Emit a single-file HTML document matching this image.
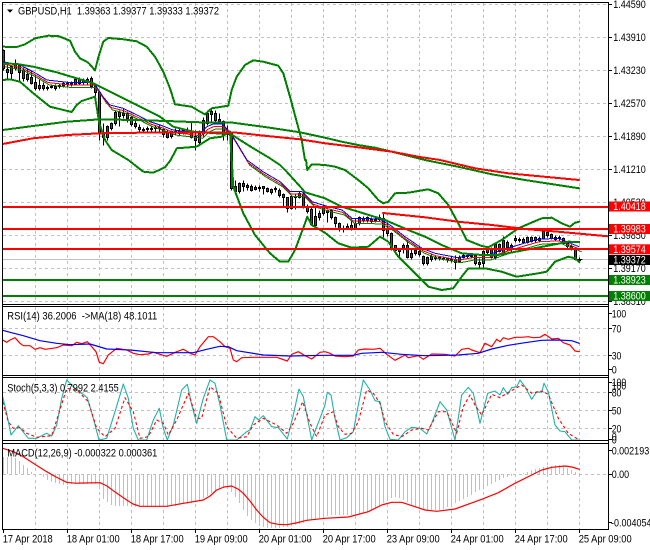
<!DOCTYPE html>
<html><head><meta charset="utf-8"><title>GBPUSD,H1</title>
<style>
html,body{margin:0;padding:0;background:#fff;width:650px;height:550px;overflow:hidden}
svg{display:block}
text{font-family:"Liberation Sans",sans-serif;font-size:10.6px;fill:#000}
.g{stroke:#c0c0c0;stroke-width:1;stroke-dasharray:3 3;fill:none}
.l{fill:none;stroke-linejoin:round;stroke-linecap:round}
.x{shape-rendering:crispEdges}
.w{fill:#fff}
</style></head><body>
<svg width="650" height="550" viewBox="0 0 650 550" xmlns="http://www.w3.org/2000/svg">
<defs>
<clipPath id="m"><rect x="3" y="3" width="605" height="301"/></clipPath>
<clipPath id="r"><rect x="3" y="307" width="605" height="68"/></clipPath>
<clipPath id="s"><rect x="3" y="378" width="605" height="62"/></clipPath>
<clipPath id="c"><rect x="3" y="444" width="605" height="85"/></clipPath>
</defs>
<!-- grid -->
<g class="g">
<path d="M35.5 3V304M67.5 3V304M99.5 3V304M131.5 3V304M163.5 3V304M195.5 3V304M227.5 3V304M259.5 3V304M291.5 3V304M323.5 3V304M355.5 3V304M387.5 3V304M419.5 3V304M451.5 3V304M483.5 3V304M515.5 3V304M547.5 3V304M579.5 3V304"/>
<path d="M3 4.5H608M3 37.5H608M3 70.5H608M3 103.5H608M3 136.5H608M3 169.5H608M3 202.5H608M3 235.5H608M3 268.5H608M3 301.5H608"/>
<path d="M35.5 307V375M67.5 307V375M99.5 307V375M131.5 307V375M163.5 307V375M195.5 307V375M227.5 307V375M259.5 307V375M291.5 307V375M323.5 307V375M355.5 307V375M387.5 307V375M419.5 307V375M451.5 307V375M483.5 307V375M515.5 307V375M547.5 307V375M579.5 307V375"/>
<path d="M3 328.5H608M3 355.5H608"/>
<path d="M35.5 378V440M67.5 378V440M99.5 378V440M131.5 378V440M163.5 378V440M195.5 378V440M227.5 378V440M259.5 378V440M291.5 378V440M323.5 378V440M355.5 378V440M387.5 378V440M419.5 378V440M451.5 378V440M483.5 378V440M515.5 378V440M547.5 378V440M579.5 378V440"/>
<path d="M3 392.5H608M3 410.5H608M3 428.5H608"/>
<path d="M35.5 444V529M67.5 444V529M99.5 444V529M131.5 444V529M163.5 444V529M195.5 444V529M227.5 444V529M259.5 444V529M291.5 444V529M323.5 444V529M355.5 444V529M387.5 444V529M419.5 444V529M451.5 444V529M483.5 444V529M515.5 444V529M547.5 444V529M579.5 444V529"/>
<path d="M3 474.5H608"/>
</g>
<path d="M3 259.5H608" stroke="#c0c0c0" fill="none"/>

<g clip-path="url(#m)">
<!-- candles -->
<g transform="translate(.5,.5)" stroke="#000" stroke-width="1">
<path fill="none" d="M3 49V70M7 62V78M11 65V80M15 59V70M19 64V81M23 67V81M27 68V81M31 71V84M35 75V90M39 79V90M43 82V90M47 85V90M51 84V88M55 84V90M59 83V88M63 81V87M67 81V86M71 81V86M75 78V85M79 77V84M83 78V84M87 77V84M91 76V88M95 83V96M99 91V140M103 123V145M107 125V140M111 122V130M115 110V125M119 110V126M123 108V118M127 111V122M131 116V126M135 120V128M139 124V132M143 127V132M147 126V132M151 125V132M155 125V131M159 125V131M163 127V137M167 129V138M171 130V138M175 128V134M179 128V135M183 128V134M187 127V133M191 122V138M195 130V150M199 130V144M203 117V136M207 110V125M211 108V122M215 110V122M219 113V123M223 120V140M227 125V140M231 131V190M235 180V194M239 182V193M243 180V191M247 183V190M251 184V191M255 185V190M259 185V191M263 186V194M267 187V192M271 188V194M275 186V192M279 188V197M283 193V206M287 197V212M291 195V209M295 193V209M299 191V198M303 192V208M307 204V213M311 207V225M315 207V227M319 210V220M323 204V215M327 209V222M331 209V219M335 216V227M339 222V231M343 225V232M347 223V229M351 218V230M355 218V229M359 216V225M363 216V222M367 216V222M371 217V223M375 217V222M379 214V221M383 213V237M387 222V236M391 232V250M395 245V254M399 248V257M403 243V253M407 240V258M411 248V259M415 249V255M419 246V256M423 255V265M427 256V265M431 254V261M435 255V260M439 256V260M443 256V260M447 257V262M451 256V262M455 255V269M459 255V262M463 253V258M467 253V258M471 253V258M475 254V265M479 258V268M483 250V268M487 248V254M491 247V258M495 243V259M499 243V252M503 236V253M507 240V250M511 243V252M515 235V242M519 237V242M523 237V243M527 236V243M531 236V242M535 236V242M539 236V242M543 230V239M547 231V237M551 233V239M555 235V240M559 235V240M563 237V244M567 241V248M571 244V250M575 247V260M579 257V261M576 259H582"/>
<path fill="#f00" d="M2 50h2V68h-2zM6 69h2v3h-2zM18 65h2v7h-2zM22 70h2v8h-2zM30 77h2v6h-2zM34 82h2v6h-2zM42 85h2v3h-2zM90 78h2v8h-2zM94 85h2v7h-2zM98 92h2v41h-2zM102 133h2v4h-2zM118 112h2v4h-2zM126 113h2v5h-2zM130 117h2v7h-2zM134 123h2v3h-2zM138 127h2v2h-2zM162 129h2v5h-2zM166 132h2v5h-2zM190 131h2v6h-2zM194 136h2v4h-2zM214 113h2v7h-2zM218 119h2v2h-2zM222 121h2v13h-2zM230 132h2v56h-2zM234 186h2v5h-2zM250 186h2v4h-2zM266 188h2v3h-2zM278 190h2v5h-2zM282 194h2v3h-2zM286 197h2v11h-2zM302 194h2v13h-2zM306 207h2v4h-2zM310 209h2v15h-2zM330 210h2v7h-2zM334 217h2v6h-2zM338 223h2v5h-2zM366 217h2v3h-2zM382 218h2v12h-2zM386 229h2v4h-2zM390 233h2v14h-2zM394 245h2v5h-2zM406 245h2v12h-2zM422 256h2v7h-2zM454 259h2v3h-2zM474 255h2v8h-2zM478 262h2v2h-2zM490 249h2v8h-2zM498 244h2v7h-2zM506 242h2v5h-2zM546 232h2v3h-2zM550 234h2v4h-2zM562 238h2v5h-2zM566 243h2v3h-2zM570 246h2v3h-2zM574 248h2v11h-2z"/>
<path fill="#008000" d="M10 66h2v7h-2zM14 64h2v4h-2zM26 74h2v5h-2zM38 85h2v3h-2zM46 87h2v1h-2zM50 86h2v1h-2zM54 86h2v2h-2zM58 85h2v1h-2zM62 83h2v2h-2zM66 83h2v1h-2zM70 83h2v1h-2zM74 79h2v5h-2zM78 79h2v4h-2zM82 80h2v2h-2zM86 79h2v3h-2zM106 126h2v11h-2zM110 123h2v5h-2zM114 112h2v11h-2zM122 113h2v2h-2zM142 129h2v1h-2zM146 128h2v1h-2zM150 128h2v1h-2zM154 127h2v1h-2zM158 127h2v1h-2zM170 131h2v5h-2zM174 131h2v1h-2zM178 131h2v2h-2zM182 130h2v2h-2zM186 130h2v1h-2zM198 131h2v11h-2zM202 120h2v13h-2zM206 113h2v10h-2zM210 111h2v3h-2zM226 131h2v3h-2zM238 183h2v8h-2zM242 183h2v3h-2zM246 185h2v2h-2zM254 187h2v2h-2zM258 187h2v1h-2zM262 186h2v2h-2zM270 189h2v3h-2zM274 188h2v1h-2zM290 196h2v12h-2zM294 196h2v1h-2zM298 193h2v4h-2zM314 216h2v9h-2zM318 213h2v4h-2zM322 206h2v7h-2zM326 210h2v2h-2zM342 228h2v1h-2zM346 226h2v2h-2zM350 225h2v4h-2zM354 223h2v5h-2zM358 217h2v6h-2zM362 218h2v2h-2zM370 219h2v2h-2zM374 219h2v1h-2zM378 217h2v2h-2zM398 248h2v3h-2zM402 245h2v4h-2zM410 253h2v4h-2zM414 250h2v3h-2zM418 251h2v3h-2zM426 257h2v6h-2zM430 256h2v3h-2zM434 257h2v1h-2zM438 257h2v1h-2zM442 258h2v1h-2zM446 258h2v1h-2zM450 259h2v1h-2zM458 257h2v4h-2zM462 255h2v2h-2zM466 255h2v1h-2zM470 255h2v1h-2zM482 251h2v12h-2zM486 249h2v3h-2zM494 244h2v13h-2zM502 240h2v12h-2zM510 245h2v4h-2zM514 238h2v2h-2zM518 239h2v1h-2zM522 239h2v3h-2zM526 237h2v5h-2zM530 237h2v4h-2zM534 237h2v3h-2zM538 238h2v2h-2zM542 231h2v7h-2zM554 237h2v2h-2zM558 237h2v1h-2zM578 259h2v1h-2z"/>
</g>
<!-- thin moving averages -->
<g class="l x" stroke-width="1">
<polyline transform="translate(2.5,5)" stroke="#008000" points="2.7,61.7 20,65 33,71.7 47,80 67,82.3 93,82.3 98,89 103,96.7 110,105 123,108.3 137,115 150,121.7 163,126 173,130 187,131.7 200,133.3 207,126.7 213,124 222,124 230,131.7 235,140 247,160 263,171.7 280,181.7 290,191.7 302,191.7 312,201.7 325,205.7 342,210 352,218.3 365,218.3 380,219.3 390,225 405,236.7 422,248.3 435,253.3 458,257.7 472,255 488,255 502,250 525,243 538,239.3 558,238.3 579,246.7"/>
<polyline transform="translate(1,2.5)" stroke="#f00" points="2.7,61.7 20,65 33,71.7 47,80 67,82.3 93,82.3 98,89 103,96.7 110,105 123,108.3 137,115 150,121.7 163,126 173,130 187,131.7 200,133.3 207,126.7 213,124 222,124 230,131.7 235,140 247,160 263,171.7 280,181.7 290,191.7 302,191.7 312,201.7 325,205.7 342,210 352,218.3 365,218.3 380,219.3 390,225 405,236.7 422,248.3 435,253.3 458,257.7 472,255 488,255 502,250 525,243 538,239.3 558,238.3 579,246.7"/>
<polyline stroke="#00f" points="2.7,61.7 20,65 33,71.7 47,80 67,82.3 93,82.3 98,89 103,96.7 110,105 123,108.3 137,115 150,121.7 163,126 173,130 187,131.7 200,133.3 207,126.7 213,124 222,124 230,131.7 235,140 247,160 263,171.7 280,181.7 290,191.7 302,191.7 312,201.7 325,205.7 342,210 352,218.3 365,218.3 380,219.3 390,225 405,236.7 422,248.3 435,253.3 458,257.7 472,255 488,255 502,250 525,243 538,239.3 558,238.3 579,246.7"/>
</g>
<!-- bollinger bands -->
<g class="l x" stroke="#008000" stroke-width="2">
<polyline points="2.7,46.7 16.7,47 25,44.3 35,38.3 48.3,35.7 58.3,36 70,40.7 75,51.7 80,58.3 88.3,62.7 95,70.3 99,55 103.3,41.7 108.3,38 123.3,39.3 136.7,41.3 146.7,46.7 155,56.7 163.3,71.7 170,88.3 175,104.3 191.7,106.7 200,111.7 205,114.3 211.7,108.3 228.3,105.7 231.7,90 236.7,76.7 245,65 253.3,60.3 263.3,61.7 278.3,65.7 283.3,73.3 290,96.7 296.7,121.7 301.7,140 305,160 306,160 307.3,170 311.7,164.3 325,165 335,166.7 345,170 358.3,180 368.3,188.3 378.3,200 383.3,203.3 388.3,201.7 395,193.3 408.3,192.7 428.3,189.3 438.3,193.3 448.3,205 458.3,223.3 466.7,240 481.7,246 488.3,247.3 501.7,240 518.3,228.3 541.7,218.3 551.7,217.7 561.7,223.3 570,226.7 575,222.7 579.3,221.7"/>
<polyline points="2.7,63.3 16.7,64 33.3,66.7 56.7,72.3 76.7,78.3 93.3,83.3 106.7,90 123.3,98.3 143.3,108.3 160,116.7 173.3,126.7 193.3,131.7 216.7,133.3 230,133.3 240,140 253.3,148.3 270,158.3 280,165 286.7,171.7 301.7,188.3 305,192.3 325,198.3 341.7,206.7 358.3,211.7 385,220 408.3,230 425,236.7 441.7,245 461.7,253.3 481.7,255 498.3,255 525,250 551.7,245 568.3,241.7 579.3,242"/>
<polyline points="2.7,80 10,79.3 20,81.7 33.3,93.3 50,106.7 71.7,112 76.7,105 81.7,101 95,96.7 99.3,123.3 105,140 111.7,150 128.3,160 143.3,171.7 153.3,172.7 165,167.3 170.7,160 176.7,148.3 196.7,146.7 210,138.3 221.7,136.7 230,131.7 233.3,186.7 243.3,213.3 255,235 270,253.3 280,261.7 288.3,261.7 295,250 305,223.3 307.3,216.7 311.7,225 325,232.7 338.3,243.3 351.7,247.7 368.3,246.7 380,236.7 388.3,241.7 398.3,256.7 415,273.3 428.3,286.7 441.7,290 453.3,288.3 461.7,276.7 468.3,268.3 485,268.3 501.7,271.7 516.7,276.7 538.3,273.3 546.7,271.7 555,261.7 568.3,256.7 575,258.3 579.3,262"/>
<polyline points="2.7,130 33,126 67,121.7 100,119.3 133,120 167,121 200,122.3 233,122.7 267,127.3 300,132.3 325,137.7 341.7,141.7 358,145 375,147.7 392,151.7 408,155.7 425,160 458,166.7 492,174.3 525,180 579,188.3"/>
</g>
<g class="l x" stroke="#f00" stroke-width="2">
<polyline points="2.7,144 33,138.3 67,135 100,133.3 167,132.3 233,132.3 267,136 300,139.3 325,143.3 358,147.3 392,151.7 418,156.7 440,160 475,168.3 508,173.3 579,180"/>
<polyline points="383,213 425,217.3 458,221.7 492,225 525,229 558,231.7 608,236.3"/>
</g>
<!-- horizontal levels -->
<g stroke-width="2" fill="none" class="x">
<path stroke="#f00" d="M3 207H608M3 229H608M3 249H608"/>
<path stroke="#008000" d="M3 280H608M3 296H608"/>
</g>
</g>

<!-- RSI -->
<g clip-path="url(#r)" class="l" stroke-width="1.2">
<polyline stroke="#f00" points="2.7,340 6.7,342.3 10,340 15,337.7 20,343.3 23.3,345.7 30,345.7 35,349.3 40,347.7 45,349.3 56.7,347.7 63.3,345 71.7,345.7 76.7,342.3 81.7,343.7 87.3,341.7 91.7,346.7 96,351.7 99.3,362.3 103.3,363.7 108.3,355 116.7,348.3 126.7,350 133.3,353.3 140,354.7 148.3,354 153.3,352.3 166.7,356.3 176.7,351.7 183.3,349.3 191.7,354 195,355 200,346.7 208.3,336.7 213.3,336.7 220,341.7 225,346.7 230,348.3 233.3,360 236.7,361.7 241.7,357.7 253.3,357.3 266.7,357.3 276.7,357.3 287.3,361 291.7,354.3 298.3,351.7 305,355.7 311.7,359 320,352.3 325,351.7 330,353.3 335,356 345,356.7 353.3,356 358.3,350 365,349 373.3,349.3 380,348.3 386.7,354.3 395,360.3 405,355 408.3,357.7 418.3,355.7 423.3,359.3 431.7,354 445,354.3 455,356 461.7,349.3 468.3,348.3 471.7,350 480,352.7 485,343.3 491.7,346.7 496.7,339.3 500,341.7 503.3,337.7 508.3,339.3 515,337.3 521.7,337.3 528.3,336.7 533.3,337.7 540,337.3 545,334.3 551.7,339 558.3,338.3 563.3,342.7 570,345 575,351 579.3,351.7"/>
<polyline stroke="#00f" points="2.7,330.3 10,332.3 23.3,335.7 40,340.7 56.7,343.3 70,344.7 90,344 106.7,349 130,350 156.7,352.7 193.3,352.7 206.7,349.3 220,346.3 228.3,346.7 236.7,350.7 263.3,355 290,356 325,355.3 353.3,355.3 361.7,353.3 381.7,352.3 401.7,354.3 425,355.7 458.3,355 478.3,353.3 491.7,349 508.3,345.3 525,342.7 541.7,340.3 558.3,340 571.7,340.7 579.3,343.3"/>
</g>

<!-- Stochastic -->
<g clip-path="url(#s)" class="l" stroke-width="1.1">
<polyline stroke="#20b2aa" points="2.7,396.7 6.7,413.3 11,435 18.3,425.7 28.3,438.3 36.7,438.3 46.7,433.3 51.7,436 56.7,425 61.7,398.3 66.7,380 75,388.3 87.3,397.7 93.3,418.3 99,440 106.7,438.3 115,411.7 123.3,384 128.3,398.3 133.3,428.3 138.3,440 146.7,440 153.3,420 159.3,408.3 163.3,428.3 167.3,440 173.3,425 181.7,390 187.3,384.3 191.7,405 196.7,423.3 203.3,398.3 210,380 215,383.3 220,405 226.7,440 236.7,440 246.7,431.7 250,430 255,416.7 258.3,420 263.3,415.7 271.7,426.7 278.3,427.7 287.3,439 293.3,415 299,389 303.3,396.7 311.7,440 320,418.3 325,405 327.3,392.3 331,395 335,418.3 340,440 346.7,437.7 353.3,431.7 358.3,405 363.3,380 370,390 375,400.7 380,401.7 385,426.7 390,439.3 398.3,440 405,431.7 411.7,427.3 420,428.3 426.7,434 431.7,423.3 440,401.7 446.7,410 455,440 461.7,395 468.3,387.3 473.3,393.3 480,423.3 487.7,393.3 495,391 500,395 503.3,387.7 507.7,394.3 511.7,387.7 516.7,386.7 520,380 525,386.7 531.7,399.3 536.7,391.7 541.7,392.3 544,383.3 548.3,391.7 555,425 560,431 565,431.7 571.7,440 579.3,440"/>
<polyline stroke="#f00" stroke-dasharray="3 2.5" style="stroke-linecap:butt" points="2.7,401.7 8.3,421.7 13.3,428.3 20,427.7 26.7,433.3 36.7,437.3 51.7,435.7 58.3,415 66.7,388.3 76.7,390 88.3,401.7 96.7,428.3 105,436.7 115,428.3 125,397.7 133.3,411.7 140,438.3 148.3,436.7 156.7,420 163.3,423.3 168.3,435 176.7,420 188.3,393.3 196.7,418.3 201.7,418.3 210,386.7 218.3,393.3 226.7,426.7 236.7,438.3 246.7,436.7 253.3,425 263.3,418.3 276.7,425 286.7,433.3 293.3,423.3 302.7,401.7 310,423.3 316.7,436.7 325,415 333.3,411.7 338.3,426.7 345,434.3 351.7,433.3 358.3,421.7 366.7,390 373.3,393.3 380,403.3 385,421.7 393.3,434.3 401.7,436.7 411.7,430 421.7,428.3 428.3,430 438.3,411.7 446.7,411.7 456.7,433.3 463.3,406.7 470,395 475,405 481.7,415 491.7,394.3 500,397.7 506.7,393.3 521.7,385 531.7,393.3 541.7,391 548.3,394.3 558.3,418.3 568.3,433.3 579.3,440"/>
</g>

<!-- MACD -->
<g clip-path="url(#c)">
<path transform="translate(.5,0)" stroke="#c0c0c0" fill="none" d="M3 474V457M7 474V457M11 474V457M15 474V458M19 474V461M23 474V465M27 474V468M31 474V472M43 474V477M47 474V480M51 474V482M55 474V483M59 474V484M63 474V485M67 474V485M71 474V484M75 474V484M79 474V484M83 474V484M87 474V484M91 474V484M95 474V484M99 474V486M103 474V499M107 474V502M111 474V505M115 474V506M119 474V506M123 474V506M127 474V506M131 474V507M135 474V507M139 474V507M143 474V507M147 474V507M151 474V507M155 474V507M159 474V507M163 474V507M167 474V507M171 474V506M175 474V506M179 474V505M183 474V504M187 474V504M191 474V503M195 474V502M199 474V500M203 474V498M207 474V496M211 474V493M215 474V491M219 474V489M223 474V488M227 474V488M231 474V492M235 474V497M239 474V503M243 474V510M247 474V516M251 474V520M255 474V523M259 474V526M263 474V527M267 474V528M271 474V528M275 474V528M279 474V528M283 474V527M287 474V527M291 474V526M295 474V525M299 474V524M303 474V523M307 474V521M311 474V520M315 474V519M319 474V518M323 474V517M327 474V516M331 474V515M335 474V515M339 474V515M343 474V515M347 474V515M351 474V515M355 474V515M359 474V514M363 474V513M367 474V512M371 474V510M375 474V508M379 474V506M383 474V503M387 474V500M391 474V498M395 474V497M399 474V498M403 474V500M407 474V502M411 474V505M415 474V507M419 474V508M423 474V509M427 474V510M431 474V510M435 474V510M439 474V510M443 474V509M447 474V507M451 474V505M455 474V503M459 474V501M463 474V499M467 474V497M471 474V495M475 474V492M479 474V490M483 474V488M487 474V486M491 474V484M495 474V482M499 474V480M503 474V478M507 474V477M511 474V476M515 474V475M523 474V473M527 474V472M531 474V470M535 474V469M539 474V468M543 474V467M547 474V466M551 474V466M555 474V465M559 474V465M563 474V466M567 474V468M571 474V470M575 474V472M579 474V473"/>
<polyline class="l" stroke="#f00" stroke-width="1.2" points="2.7,448.3 13.3,451.7 23.3,456.7 33.3,463.3 46.7,471.7 56,477 66.7,482.3 75,483.2 83.3,483 100,482.7 107,486 113.3,490.7 126.7,500 133,504 140,506.3 166.7,506.3 183.3,503.3 203.3,500 210,496 216.7,490 224,487 231.7,486 238,489 243.3,493.3 250,501 256.7,510 263,517 270,522.7 278,524.3 286.7,524.7 296,523 306.7,520.3 325,518.3 348.3,517 368.3,511.7 381.7,505 391.7,502.3 401.7,502.3 425,510 436.7,511.3 455,509 481.7,499.3 498.3,492.7 515,483.3 541.7,470 552,467.3 565,466 572,467 579.3,469.3"/>
</g>

<!-- frames -->
<g fill="none" stroke="#000" stroke-width="1">
<path d="M2.5 2.5H608.5V529.5H2.5Z"/>
<path d="M2.5 304.5H608.5M2.5 306.5H608.5M2.5 375.5H608.5M2.5 377.5H608.5M2.5 440.5H608.5M2.5 443.5H608.5"/>
<path d="M608 4.5h4M608 37.5h4M608 70.5h4M608 103.5h4M608 136.5h4M608 169.5h4M608 202.5h4M608 235.5h4M608 268.5h4M608 301.5h4M608 313.5h4M608 328.5h4M608 355.5h4M608 369.5h4M608 382.5h4M608 392.5h4M608 410.5h4M608 428.5h4M608 439.5h4M608 450.5h4M608 474.5h4M608 522.5h4"/>
<path d="M3.5 529v4M67.5 529v4M131.5 529v4M195.5 529v4M259.5 529v4M323.5 529v4M387.5 529v4M451.5 529v4M515.5 529v4M579.5 529v4"/>
</g>

<!-- title -->
<path d="M7 9.5h6l-3 3.2z" fill="#000"/>
<text x="18" y="14.4" textLength="201" lengthAdjust="spacingAndGlyphs" xml:space="preserve">GBPUSD,H1  1.39363 1.39377 1.39333 1.39372</text>
<text x="7.3" y="319.4" textLength="150" lengthAdjust="spacingAndGlyphs" xml:space="preserve">RSI(14) 36.2006  -&gt;MA(18) 48.1011</text>
<text x="7.3" y="391.4" textLength="111.5" lengthAdjust="spacingAndGlyphs">Stoch(5,3,3) 0.7992 2.4155</text>
<text x="7.3" y="456.4" textLength="150" lengthAdjust="spacingAndGlyphs">MACD(12,26,9) -0.000322 0.000361</text>

<!-- price axis -->
<g>
<text x="613.3" y="7.8" textLength="32.5" lengthAdjust="spacingAndGlyphs">1.44590</text>
<text x="613.3" y="40.8" textLength="32.5" lengthAdjust="spacingAndGlyphs">1.43910</text>
<text x="613.3" y="73.8" textLength="32.5" lengthAdjust="spacingAndGlyphs">1.43230</text>
<text x="613.3" y="106.8" textLength="32.5" lengthAdjust="spacingAndGlyphs">1.42570</text>
<text x="613.3" y="139.8" textLength="32.5" lengthAdjust="spacingAndGlyphs">1.41890</text>
<text x="613.3" y="172.8" textLength="32.5" lengthAdjust="spacingAndGlyphs">1.41210</text>
<text x="613.3" y="205.8" textLength="32.5" lengthAdjust="spacingAndGlyphs">1.40530</text>
<text x="613.3" y="238.8" textLength="32.5" lengthAdjust="spacingAndGlyphs">1.39850</text>
<text x="613.3" y="271.8" textLength="32.5" lengthAdjust="spacingAndGlyphs">1.39170</text>
<text x="613.3" y="304.8" textLength="32.5" lengthAdjust="spacingAndGlyphs">1.38510</text>
</g>
<g>
<rect x="609" y="201.5" width="41" height="10" fill="#f00"/>
<rect x="609" y="224" width="41" height="10" fill="#f00"/>
<rect x="609" y="244.3" width="41" height="10" fill="#f00"/>
<rect x="609" y="255" width="41" height="10" fill="#000"/>
<rect x="609" y="275" width="41" height="10" fill="#008000"/>
<rect x="609" y="291" width="41" height="10" fill="#008000"/>
<text class="w" style="fill:#fff" x="613.3" y="210.2" textLength="32.5" lengthAdjust="spacingAndGlyphs">1.40418</text>
<text class="w" style="fill:#fff" x="613.3" y="232.7" textLength="32.5" lengthAdjust="spacingAndGlyphs">1.39983</text>
<text class="w" style="fill:#fff" x="613.3" y="253" textLength="32.5" lengthAdjust="spacingAndGlyphs">1.39574</text>
<text class="w" style="fill:#fff" x="613.3" y="263.7" textLength="32.5" lengthAdjust="spacingAndGlyphs">1.39372</text>
<text class="w" style="fill:#fff" x="613.3" y="283.7" textLength="32.5" lengthAdjust="spacingAndGlyphs">1.38923</text>
<text class="w" style="fill:#fff" x="613.3" y="299.7" textLength="32.5" lengthAdjust="spacingAndGlyphs">1.38600</text>
</g>

<!-- indicator axes -->
<text x="611.7" y="317.3" textLength="14.5" lengthAdjust="spacingAndGlyphs">100</text>
<text x="611.7" y="332.3" textLength="9.7" lengthAdjust="spacingAndGlyphs">70</text>
<text x="611.7" y="359.3" textLength="9.7" lengthAdjust="spacingAndGlyphs">30</text>
<text x="611.7" y="373.3" textLength="5" lengthAdjust="spacingAndGlyphs">0</text>
<text x="611.7" y="385.8" textLength="14.5" lengthAdjust="spacingAndGlyphs">100</text>
<text x="611.7" y="389.3" textLength="14.5" lengthAdjust="spacingAndGlyphs">100</text>
<text x="611.7" y="396.3" textLength="9.7" lengthAdjust="spacingAndGlyphs">80</text>
<text x="611.7" y="414.3" textLength="9.7" lengthAdjust="spacingAndGlyphs">50</text>
<text x="611.7" y="432.3" textLength="9.7" lengthAdjust="spacingAndGlyphs">20</text>
<text x="611.7" y="440.3" textLength="5" lengthAdjust="spacingAndGlyphs">0</text>
<text x="611.7" y="443.3" textLength="5" lengthAdjust="spacingAndGlyphs">0</text>
<text x="611.7" y="454.6" textLength="37.5" lengthAdjust="spacingAndGlyphs">0.002193</text>
<text x="611.7" y="477.9" textLength="17.5" lengthAdjust="spacingAndGlyphs">0.00</text>
<text x="611" y="526.3" textLength="40.5" lengthAdjust="spacingAndGlyphs">-0.004054</text>

<!-- time axis -->
<text x="2.7" y="542.5" textLength="50" lengthAdjust="spacingAndGlyphs">17 Apr 2018</text>
<text x="66.7" y="542.5" textLength="53" lengthAdjust="spacingAndGlyphs">18 Apr 01:00</text>
<text x="130.7" y="542.5" textLength="53" lengthAdjust="spacingAndGlyphs">18 Apr 17:00</text>
<text x="194.7" y="542.5" textLength="53" lengthAdjust="spacingAndGlyphs">19 Apr 09:00</text>
<text x="258.7" y="542.5" textLength="53" lengthAdjust="spacingAndGlyphs">20 Apr 01:00</text>
<text x="322.7" y="542.5" textLength="53" lengthAdjust="spacingAndGlyphs">20 Apr 17:00</text>
<text x="386.7" y="542.5" textLength="53" lengthAdjust="spacingAndGlyphs">23 Apr 09:00</text>
<text x="450.7" y="542.5" textLength="53" lengthAdjust="spacingAndGlyphs">24 Apr 01:00</text>
<text x="514.7" y="542.5" textLength="53" lengthAdjust="spacingAndGlyphs">24 Apr 17:00</text>
<text x="578.7" y="542.5" textLength="53" lengthAdjust="spacingAndGlyphs">25 Apr 09:00</text>
</svg>
</body></html>
